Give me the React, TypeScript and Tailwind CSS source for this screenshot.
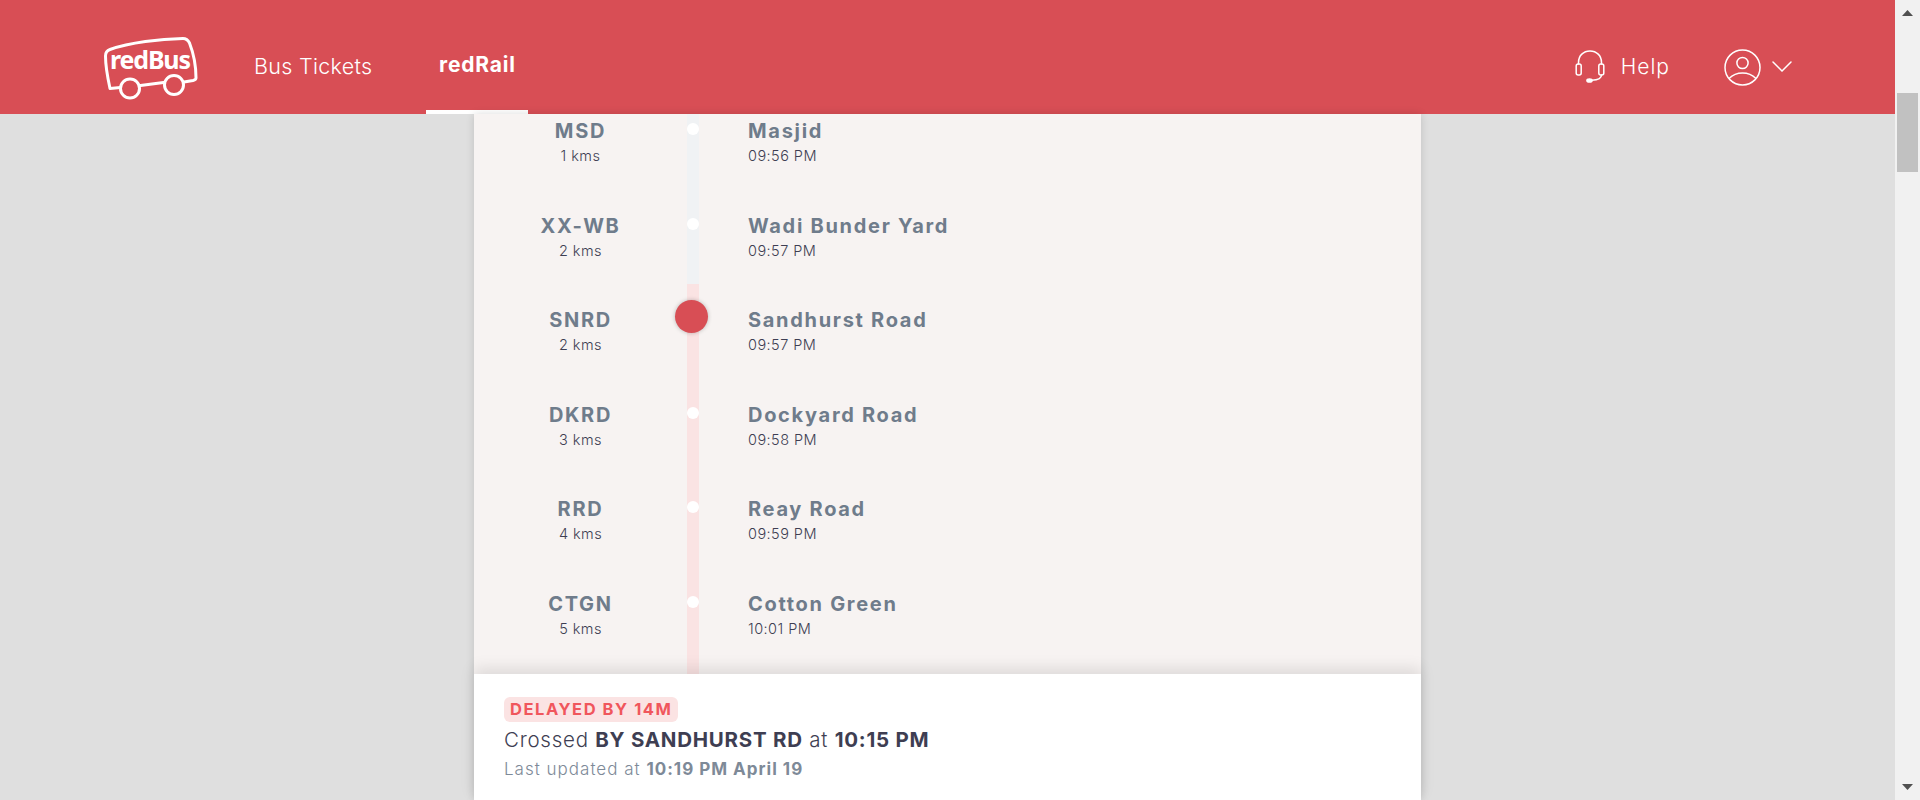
const stops = [
  { code: 'MSD', km: '1 kms', name: 'Masjid', time: '09:56 PM', passed: true },
  { code: 'XX-WB', km: '2 kms', name: 'Wadi Bunder Yard', time: '09:57 PM', passed: true },
  { code: 'SNRD', km: '2 kms', name: 'Sandhurst Road', time: '09:57 PM', current: true },
  { code: 'DKRD', km: '3 kms', name: 'Dockyard Road', time: '09:58 PM' },
  { code: 'RRD', km: '4 kms', name: 'Reay Road', time: '09:59 PM' },
  { code: 'CTGN', km: '5 kms', name: 'Cotton Green', time: '10:01 PM' },
];

const Logo = () => (
  <svg width="100" height="65" viewBox="0 0 100 65" fill="none" className="text-white">
    <path
      d="M20.5 52.5 L10 53.5 C7.5 42 5.5 30 5.5 21 C5.5 17 7 15.5 10 14.5 C30 7.5 60 4 83 3.5 C86 3.5 88 5 89.5 8 C93 17 96 32 96 43 C96 44.5 95 45 93 45.5 L84 47 M63.5 47.5 L40.5 50.5"
      stroke="currentColor"
      strokeWidth="3"
      strokeLinejoin="round"
      strokeLinecap="round"
    />
    <circle cx="30" cy="53.5" r="9.5" stroke="currentColor" strokeWidth="3" />
    <circle cx="74" cy="50" r="9.5" stroke="currentColor" strokeWidth="3" />
    <text x="10" y="34" fill="currentColor" fontFamily="'Noto Sans', sans-serif" fontSize="25" fontWeight="700" textLength="81">
      redBus
    </text>
  </svg>
);

const HeadsetIcon = () => (
  <svg width="30" height="34" viewBox="0 0 30 34" fill="none" stroke="white" strokeWidth="1.5" strokeLinecap="round">
    <path d="M3.5 14 V12.5 C3.5 5.5 8.5 1 15 1 C21.5 1 26.5 5.5 26.5 12.5 V14" />
    <rect x="1.2" y="14" width="5" height="11" rx="2" />
    <rect x="23.8" y="14" width="5" height="11" rx="2" />
    <path d="M26.5 25 C26.5 28.5 23 30 17 30.2" />
    <ellipse cx="14.5" cy="30.5" rx="2.6" ry="1.6" fill="white" />
  </svg>
);

const UserIcon = () => (
  <svg width="37" height="37" viewBox="0 0 37 37" fill="none" stroke="white" strokeWidth="1.5">
    <circle cx="18.5" cy="18.5" r="17.5" />
    <circle cx="18.5" cy="14" r="5.6" />
    <path d="M5 29.5 C9 25.5 13.5 24 18.5 24 C23.5 24 28 25.5 32 29.5" />
  </svg>
);

const Chevron = () => (
  <svg width="20" height="11" viewBox="0 0 20 11" fill="none" stroke="white" strokeWidth="1.5" strokeLinecap="round">
    <path d="M1 1 L10 10 L19 1" />
  </svg>
);

const Header = () => (
  <header className="flex h-[114px] shrink-0 items-stretch bg-[#d84e55] text-white">
    <div className="ml-[100px] flex items-center pt-[20px]">
      <Logo />
    </div>
    <a className="ml-[54px] flex items-center pt-[19px] text-[21.5px] font-light tracking-[0.3px]">Bus Tickets</a>
    <a className="ml-[54px] flex w-[102px] items-center justify-center border-b-4 border-white pt-[19px] text-[21px] font-bold tracking-[0.8px]">
      redRail
    </a>
    <div className="ml-auto flex items-center pt-[20px]">
      <HeadsetIcon />
      <span className="ml-[16px] text-[21px] font-light tracking-[1px]">Help</span>
      <div className="ml-[54px]">
        <UserIcon />
      </div>
      <div className="mr-[103px] mb-[2px] ml-[11px]">
        <Chevron />
      </div>
    </div>
  </header>
);

type Stop = (typeof stops)[number];

const StopRow = ({ stop }: { stop: Stop }) => (
  <div className="flex h-[94.5px] shrink-0">
    <div className="flex w-[213px] flex-col items-center pt-[24px]">
      <span className="text-[20px] leading-[24px] font-bold tracking-[1.7px] text-[#6f7c8b]">{stop.code}</span>
      <span className="mt-[3px] text-[14.5px] leading-[20px] font-light tracking-[0.45px] text-[#3e3e52]">{stop.km}</span>
    </div>
    <div className={`relative w-[12px] ${stop.passed ? 'bg-[#f0f2f4]' : 'bg-[#fae3e3]'}`}>
      {stop.current ? (
        <div className="absolute top-[16px] left-[-12px] h-[33px] w-[33px] rounded-full bg-[#d84e55] shadow-[0_0_4px_rgba(0,0,0,0.25)]" />
      ) : (
        <div className="absolute top-[28px] left-0 h-[12px] w-[12px] rounded-full bg-white" />
      )}
    </div>
    <div className="ml-[49px] flex flex-col pt-[24px]">
      <span className="text-[20px] leading-[24px] font-bold tracking-[1.7px] text-[#6f7c8b]">{stop.name}</span>
      <span className="mt-[3px] text-[14.5px] leading-[20px] font-light tracking-[0.45px] text-[#3e3e52]">{stop.time}</span>
    </div>
  </div>
);

const StatusPanel = () => (
  <div className="relative h-[126px] shrink-0 bg-white pt-[23px] pl-[30px] shadow-[0_-6px_14px_rgba(0,0,0,0.1)]">
    <span className="inline-block h-[25px] rounded-[6px] bg-[#fbe3e3] px-[6px] text-[16.5px] leading-[25px] font-bold tracking-[1.55px] text-[#f0565c]">
      DELAYED BY 14M
    </span>
    <p className="mt-[4px] text-[20.5px] leading-[28px] font-light tracking-[0.75px] text-[#3e3e52]">
      Crossed <b className="font-bold">BY SANDHURST RD</b> at <b className="font-bold">10:15 PM</b>
    </p>
    <p className="mt-[3px] text-[17px] leading-[24px] font-light tracking-[1px] text-[#7e8a98]">
      Last updated at <b className="font-bold">10:19 PM April 19</b>
    </p>
  </div>
);

const Scrollbar = () => (
  <div className="flex h-full w-[25px] shrink-0 flex-col items-center bg-[#f1f1f1]">
    <svg width="11" height="6" viewBox="0 0 11 6" className="mt-[10px] shrink-0">
      <path d="M5.5 0 L11 6 H0 Z" fill="#505050" />
    </svg>
    <div className="mt-[77px] h-[79px] w-[21px] shrink-0 bg-[#c1c1c1]" />
    <svg width="11" height="6" viewBox="0 0 11 6" className="mt-auto mb-[10px] shrink-0">
      <path d="M5.5 6 L11 0 H0 Z" fill="#505050" />
    </svg>
  </div>
);

export default function App() {
  return (
    <div className="flex h-screen overflow-hidden font-['Inter',sans-serif]">
      <div className="flex min-w-0 flex-1 flex-col">
        <Header />
        <div className="flex min-h-0 flex-1 bg-[#dfdfdf] pl-[474px]">
          <div className="flex w-[947px] flex-col bg-[#f7f3f2] shadow-[0_0_8px_rgba(0,0,0,0.14)]">
            <div className="min-h-0 flex-1 overflow-hidden">
              <div className="mt-[-19px] flex flex-col">
                {stops.map(s => (
                  <StopRow key={s.code} stop={s} />
                ))}
                <div className="ml-[213px] h-[12px] w-[12px] bg-[#fae3e3]" />
              </div>
            </div>
            <StatusPanel />
          </div>
        </div>
      </div>
      <Scrollbar />
    </div>
  );
}
